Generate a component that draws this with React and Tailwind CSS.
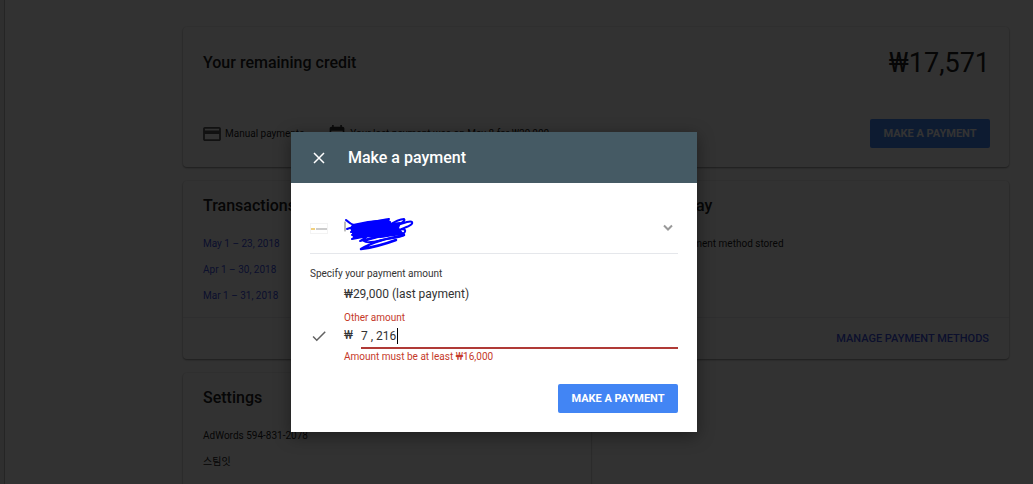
import { useState } from "react"

const transactions = ["May 1 – 23, 2018", "Apr 1 – 30, 2018", "Mar 1 – 31, 2018"]

function Card({ children, className = "" }) {
    return (
        <section className={`bg-[#fbfbfb] rounded-sm shadow-[0_1px_2px_rgba(0,0,0,0.4),0_0_2px_rgba(0,0,0,0.15)] ${className}`}>
            {children}
        </section>
    )
}

function PayButton() {
    return (
        <button className="h-[29px] w-[120px] text-[11px] font-bold text-white uppercase bg-[#4285f4] rounded-xs">
            Make a payment
        </button>
    )
}

function Scribble() {
    return (
        <svg width="72" height="35" viewBox="0 0 72 35" fill="none" stroke="#0000ff" strokeWidth="2" strokeLinecap="round" strokeLinejoin="round" aria-hidden="true">
            <path d="M1 6v9" stroke="#777" strokeWidth="1" />
            <path d="M9 9 L24 6 L44 4 L47 8 L56 7 L54 12 L58 17 L46 19 L34 21 L20 20 L10 22 L9 17 L7 12 Z" fill="#0000ff" />
            <path d="M2 4 C5 7 9 9 12 10 C18 7 34 5 45 3 C38 6 28 8 24 10 C34 8 42 6 46 6 L44 10 C50 6 56 3 60 3 C62 5 57 7 54 9 C60 7 66 4 68 6 C70 9 60 12 55 14 C60 12 63 14 60 17 C52 17 44 20 36 21 C46 20 56 17 60 19 C56 22 46 22 38 24 C30 26 22 27 20 25 C26 23 30 22 34 21" />
            <path d="M3 13 C8 11 12 12 14 13 L7 16 L18 15 L8 19 L20 18 L8 23 L24 20 L16 25 L32 21" />
            <path d="M60 19 C46 22 30 25 17 33 C32 31 44 27 52 24" strokeWidth="2.500" />
        </svg>
    )
}

export default function App() {

    const [amount, setAmount] = useState("7 , 216")

    return (
        <div className="relative flex h-screen overflow-hidden bg-[#fafafa] font-[Roboto,'Noto_Sans_CJK_KR',sans-serif] text-[10px] leading-4 text-[#212121]">

            <aside className="w-[5px] shrink-0 border-r border-[#bbb] bg-[#e8e8e8]" />

            <main className="flex-1 pt-[27px] pl-[178px] pr-6">

                {/* Remaining credit */}
                <Card className="h-[140px] pl-5 pr-[19px] pt-5 flex flex-col">
                    <div className="flex items-center justify-between h-8">
                        <h2 className="text-base font-medium">Your remaining credit</h2>
                        <p className="text-[27px]">₩17,571</p>
                    </div>

                    <div className="flex items-center mt-10">
                        <svg width="18" height="16" viewBox="2 3 20 18" fill="#555" aria-hidden="true">
                            <path d="M20 4H4c-1.110 0-2 .890-2 2v12c0 1.110.890 2 2 2h16c1.110 0 2-.890 2-2V6c0-1.110-.890-2-2-2zm0 14H4v-6h16v6zm0-10H4V6h16v2z" />
                        </svg>
                        <p className="ml-1">Manual payments</p>
                        <svg className="ml-6" width="18" height="18" viewBox="1 1 22 22" fill="#333" aria-hidden="true">
                            <path d="M19 3h-1V1h-2v2H8V1H6v2H5c-1.110 0-2 .9-2 2v14c0 1.100.890 2 2 2h14c1.100 0 2-.9 2-2V5c0-1.100-.9-2-2-2zm0 16H5V8h14v11z" />
                        </svg>
                        <p className="ml-1">Your last payment was on May 8 for ₩29,000</p>
                        <div className="ml-auto">
                            <PayButton />
                        </div>
                    </div>
                </Card>

                <div className="grid grid-cols-2 mt-3.5 gap-x-2.5 gap-y-3.5">

                    {/* Transactions */}
                    <Card className="h-[178px] flex flex-col">
                        <div className="flex-1 px-5 pt-[15px]">
                            <h2 className="text-base font-medium leading-5">Transactions</h2>
                            <ul className="mt-5 space-y-2.5">
                                {transactions.map((item) => (
                                    <li key={item}>
                                        <a href="#" className="text-[#3c4fe0]">{item}</a>
                                    </li>
                                ))}
                            </ul>
                        </div>
                        <div className="h-[42px] border-t border-gray-200" />
                    </Card>

                    {/* How you pay */}
                    <Card className="h-[178px] flex flex-col">
                        <div className="flex-1 px-5 pt-[15px]">
                            <h2 className="text-base font-medium leading-5">How you pay</h2>
                            <p className="mt-5">You have no payment method stored</p>
                        </div>
                        <div className="flex items-center justify-end h-[42px] px-5 border-t border-gray-200">
                            <a href="#" className="text-[11px] font-medium text-[#3c4fe0] uppercase">Manage payment methods</a>
                        </div>
                    </Card>

                    {/* Settings */}
                    <Card className="h-[178px] px-5 pt-[15px]">
                        <h2 className="text-base font-medium leading-5">Settings</h2>
                        <p className="mt-5">AdWords 594-831-2078</p>
                        <p className="mt-2.5">스팀잇</p>
                    </Card>

                </div>

            </main>

            {/* Payment dialog */}
            <div className="absolute inset-0 flex items-start justify-center pt-33 pr-[45px] bg-black/80">
                <div role="dialog" aria-labelledby="dialog-title" className="w-[406px] bg-white text-[#333] shadow-[0_4px_16px_rgba(0,0,0,0.4)]">

                    <header className="flex items-center h-[51px] px-[21px] text-white bg-[#455a64]">
                        <button aria-label="Close">
                            <svg width="14" height="14" viewBox="0 0 14 14" stroke="currentColor" strokeWidth="1.500" aria-hidden="true">
                                <path d="M2 2l10 10M12 2L2 12" />
                            </svg>
                        </button>
                        <h1 id="dialog-title" className="ml-[22px] text-base font-medium">Make a payment</h1>
                    </header>

                    <div className="px-[19px] pt-[33px] pb-[19px]">

                        <button aria-label="Payment method" className="flex w-full pb-0.5 border-b border-gray-200">
                            <svg className="mt-1" width="18" height="16" viewBox="0 0 18 16" aria-hidden="true">
                                <rect x="0.500" y="3.500" width="17" height="10" fill="#fff" stroke="#f3f3f3" />
                                <path d="M1 9h4" stroke="#f0d080" strokeWidth="2" />
                                <path d="M6 9h11" stroke="#ccc" strokeWidth="2" />
                            </svg>
                            <span className="ml-4">
                                <Scribble />
                            </span>
                            <svg className="mt-[7px] ml-auto mr-1" width="12" height="10" viewBox="0 0 12 10" fill="none" stroke="#999" strokeWidth="2" aria-hidden="true">
                                <path d="M2 2.500l4 4 4-4" />
                            </svg>
                        </button>

                        <p className="mt-3">Specify your payment amount</p>
                        <p className="mt-1 ml-[34px] text-xs">₩29,000 (last payment)</p>

                        <div className="grid grid-cols-[34px_17px_1fr] items-start mt-2">
                            <label htmlFor="amount" className="col-start-2 col-span-2 text-[#c53929]">Other amount</label>
                            <svg className="mt-px" width="18" height="18" viewBox="0 0 24 24" fill="#616161" aria-hidden="true">
                                <path d="M9 16.170L4.830 12l-1.420 1.410L9 19 21 7l-1.410-1.410z" />
                            </svg>
                            <span className="mt-px text-xs">₩</span>
                            <div className="flex items-start h-[23px] pt-0.5 border-b-2 border-[#b03a36]">
                                <input
                                    id="amount"
                                    type="text"
                                    value={amount}
                                    onChange={(e) => setAmount(e.target.value)}
                                    className="w-9 text-xs outline-none field-sizing-content"
                                />
                                <span className="w-px h-4 bg-black" />
                            </div>
                            <p className="col-start-2 col-span-2 text-[#c53929]">Amount must be at least ₩16,000</p>
                        </div>

                        <div className="flex justify-end mt-[19px]">
                            <PayButton />
                        </div>

                    </div>

                </div>
            </div>

        </div>
    )
}
